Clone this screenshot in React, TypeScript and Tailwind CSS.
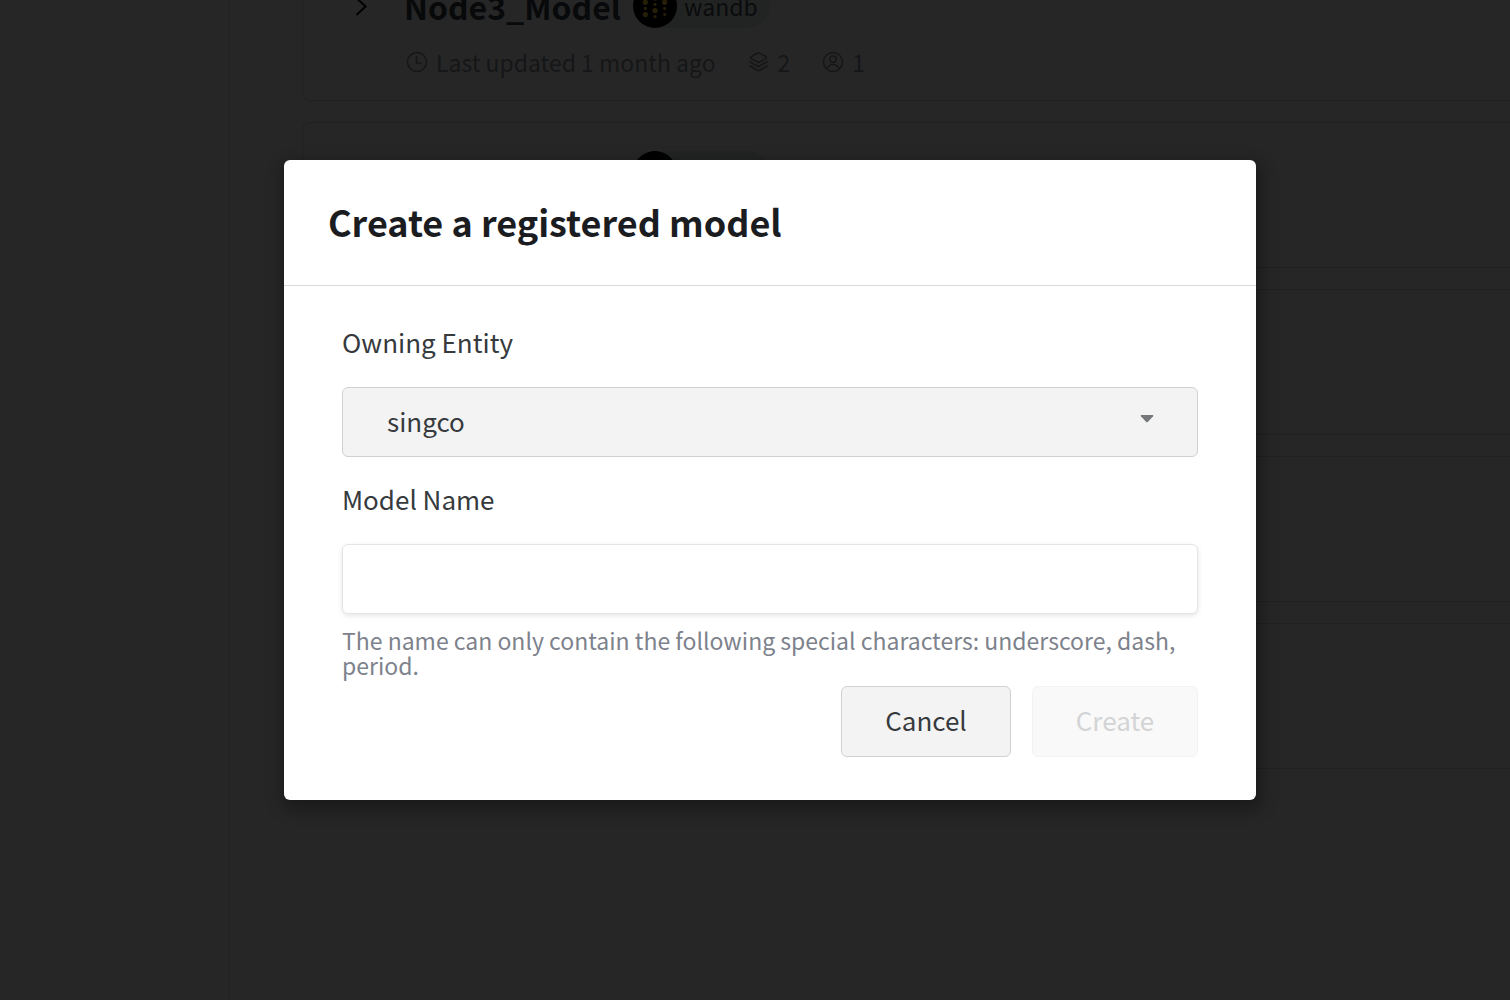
import { useState } from "react";

type Model = { id: number; name?: string; team?: string; updated?: string; versions?: number; members?: number };

const models: Model[] = [
  { id: 1, name: "Node3_Model", team: "wandb", updated: "1 month ago", versions: 2, members: 1 },
  { id: 2 },
  { id: 3 },
  { id: 4 },
  { id: 5 },
];

function WandbLogo() {
  return (
    <svg viewBox="0 0 44 44" className="relative z-10 size-11 shrink-0" aria-hidden="true">
      <circle cx="22" cy="22" r="22" fill="#000" />
      <g fill="#ffcc33">
        <circle cx="12.3" cy="12.3" r="1.6" />
        <circle cx="12.3" cy="18.3" r="2.6" />
        <circle cx="12.3" cy="24.4" r="1.6" />
        <circle cx="12.3" cy="30.6" r="2.6" />
        <circle cx="22" cy="14" r="2.6" />
        <circle cx="22" cy="20.4" r="1.6" />
        <circle cx="22" cy="26.6" r="2.6" />
        <circle cx="22" cy="32.6" r="1.6" />
        <circle cx="31.7" cy="12.3" r="1.6" />
        <circle cx="31.7" cy="18.3" r="2.6" />
        <circle cx="31.7" cy="24.4" r="1.6" />
        <circle cx="31.7" cy="30.6" r="1.6" />
      </g>
    </svg>
  );
}

function ClockIcon() {
  return (
    <svg viewBox="0 0 22 22" className="size-[22px]" fill="none" stroke="currentColor" strokeWidth="1.6" aria-hidden="true">
      <circle cx="11" cy="11" r="9.5" />
      <path d="M10.5 5v7h5" />
    </svg>
  );
}

function LayersIcon() {
  return (
    <svg viewBox="0 0 22 22" className="size-[22px]" fill="none" stroke="currentColor" strokeWidth="1.6" strokeLinejoin="round" strokeLinecap="round" aria-hidden="true">
      <path d="M9.7 2 Q10.5 1.6 11.3 2 L18 5.8 Q19.3 6.6 18 7.4 L11.3 11.2 Q10.5 11.6 9.7 11.2 L3 7.4 Q1.7 6.6 3 5.8 Z" />
      <path d="M1.8 10.7 L9.7 15.2 Q10.5 15.6 11.3 15.2 L19.2 10.7" />
      <path d="M1.8 14.8 L9.7 19.5 Q10.5 20 11.3 19.5 L19.2 14.8" />
    </svg>
  );
}

function UserIcon() {
  return (
    <svg viewBox="0 0 22 22" className="size-[22px]" fill="none" stroke="currentColor" strokeWidth="1.6" aria-hidden="true">
      <circle cx="11" cy="11" r="9.5" />
      <circle cx="11" cy="8.2" r="3.2" />
      <path d="M4.8 18.2c1-3.2 3.3-4.7 6.2-4.7s5.200 1.500 6.200 4.700" />
    </svg>
  );
}

function ModelCard({ model }: { model: Model }) {
  return (
    <article className="flex h-[146px] rounded-l-lg border border-r-0 border-[#dcdcdc] bg-white pt-7 pl-11">
      <button type="button" aria-label="Expand model" className="flex h-11 w-7 items-center justify-center text-black">
        <svg viewBox="0 0 14 20" className="h-5 w-3.5" fill="none" stroke="currentColor" strokeWidth="2" aria-hidden="true">
          <path d="M2.500 2l9 8.500L2.500 19" />
        </svg>
      </button>
      <div className="flex flex-col gap-[18px] pl-[29px]">
        <div className="flex items-center gap-3">
          <h2 className="min-w-[217px] text-[32px] leading-[44px] font-bold text-[#363c44]">{model.name}</h2>
          <div className="flex items-center">
            <WandbLogo />
            <span className="-ml-8 flex h-11 min-w-[125px] items-center rounded-full bg-[#e4f0f0] pr-3 pl-[39px] text-[23px] leading-[44px] text-[#464c54]">
              {model.team}
            </span>
          </div>
        </div>
        {model.updated && (
          <div className="flex h-8 items-center gap-8 pl-0.5 text-[23px] leading-8 text-[#8e949e]">
            <span className="flex items-center gap-2">
              <ClockIcon />
              Last updated {model.updated}
            </span>
            <span className="flex items-center gap-2">
              <LayersIcon />
              {model.versions}
            </span>
            <span className="flex items-center gap-2">
              <UserIcon />
              {model.members}
            </span>
          </div>
        )}
      </div>
    </article>
  );
}

export default function App() {
  const [entity, setEntity] = useState("singco");
  const [name, setName] = useState("");

  return (
    <div className="relative h-screen overflow-hidden bg-white font-['Noto_Sans_CJK_SC','Noto_Sans',sans-serif]">
      <div className="flex h-full" inert>
        <aside className="w-[230px] shrink-0 border-r border-[#e4e4e4] bg-white" />
        <main className="min-w-0 flex-1 bg-[#fafafa] pl-[72px]">
          <div className="-mt-[45px] flex flex-col gap-[21px]">
            {models.map((m) => (
              <ModelCard key={m.id} model={m} />
            ))}
          </div>
        </main>
      </div>

      <div className="absolute inset-0 z-20 flex items-start justify-center bg-black/85 pt-40 pl-[30px]">
        <section
          role="dialog"
          aria-modal="true"
          aria-labelledby="dialog-title"
          className="w-[972px] rounded-md bg-white shadow-[2px_6px_16px_4px_rgba(0,0,0,0.3)]"
        >
          <header className="border-b border-[#d9dadb] px-11 pt-[33px] pb-9">
            <h1 id="dialog-title" className="text-[36px] leading-[56px] font-bold text-[#1b1c1f]">
              Create a registered model
            </h1>
          </header>
          <form className="flex flex-col px-[58px] pt-9 pb-[43px] text-[26px] text-[#363a3d]" onSubmit={(e) => e.preventDefault()}>
            <label htmlFor="entity" className="leading-10">
              Owning Entity
            </label>
            <div className="relative mt-[25px]">
              <select
                id="entity"
                value={entity}
                onChange={(e) => setEntity(e.target.value)}
                className="block h-[70px] w-full appearance-none rounded-md border border-[#cfd0d1] bg-[#f3f3f3] px-11 pb-0.5 leading-10"
              >
                <option value="singco">singco</option>
              </select>
              <svg viewBox="0 0 14 8" className="pointer-events-none absolute top-7 right-11 h-2 w-3.5" fill="#76777a" aria-hidden="true">
                <path d="M1.2 0h11.6q1 .3.3 1.2L8 6.8q-1 1-2 0L.9 1.2Q.2.3 1.2 0Z" />
              </svg>
            </div>
            <label htmlFor="model-name" className="mt-[22px] leading-10">
              Model Name
            </label>
            <input
              id="model-name"
              type="text"
              value={name}
              onChange={(e) => setName(e.target.value)}
              aria-describedby="name-hint"
              className="mt-[25px] h-[70px] rounded-md border border-[#e4e5e9] bg-white px-5 shadow-[0_2px_5px_rgba(0,0,0,0.1)]"
            />
            <p id="name-hint" className="mt-3.5 text-[23px] leading-[25px] text-[#7d828c]">
              The name can only contain the following special characters: underscore, dash, period.
            </p>
            <div className="mt-2 flex justify-end gap-[21px]">
              <button type="button" className="h-[71px] w-[170px] rounded-md border border-[#cfd0d1] bg-[#f3f3f3] pb-1">
                Cancel
              </button>
              <button
                type="submit"
                disabled={name === ""}
                className="h-[71px] w-[166px] rounded-md border border-[#cfd0d1] bg-[#f3f3f3] pb-1 disabled:border-[#f3f3f3] disabled:bg-[#f9f9f9] disabled:text-[#d3d4d5]"
              >
                Create
              </button>
            </div>
          </form>
        </section>
      </div>
    </div>
  );
}
